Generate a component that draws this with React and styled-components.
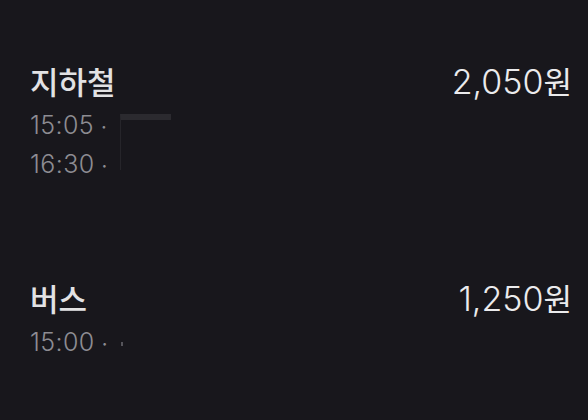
import styled, { createGlobalStyle } from 'styled-components'

const GlobalStyle = createGlobalStyle`
  html, body {
    margin: 0;
    padding: 0;
    background: #18171c;
  }
  body {
    font-family: "Inter", "Noto Sans CJK KR", sans-serif;
    -webkit-font-smoothing: antialiased;
  }
`

const Page = styled.div`
  width: 588px;
  height: 420px;
  box-sizing: border-box;
  padding: 63px 16px 0 30px;
  background: #18171c;
  display: flex;
  flex-direction: column;
  gap: 95px;
  overflow: hidden;
`

const Route = styled.div`
  display: flex;
  justify-content: space-between;
  align-items: flex-start;
`

const Info = styled.div`
  display: flex;
  flex-direction: column;
`

const Title = styled.div`
  font-family: "Noto Sans CJK KR", sans-serif;
  font-size: 31px;
  font-weight: 500;
  line-height: 36px;
  color: #e2e2e4;
`

const TimeBlock = styled.div`
  display: flex;
  margin-top: 8px;
`

const Times = styled.div`
  display: flex;
  flex-direction: column;
`

const Time = styled.div`
  font-size: 25px;
  font-weight: 350;
  letter-spacing: 0.4px;
  line-height: 37px;
  color: #8d8c92;
  white-space: nowrap;
`

const Dot = styled.span`
  margin-left: 7px;
  font-size: 20px;
  font-weight: 400;
`

const Skeleton = styled.div`
  width: 50px;
  height: 50px;
  margin: 7px 0 0 ${p => p.offset}px;
  border-top: 6px solid #2b2a2f;
  border-left: 1px solid #26252a;
`

const Speck = styled.span`
  display: inline-block;
  width: 2px;
  height: 4px;
  margin-left: 13px;
  vertical-align: middle;
  background: #55545a;
`

const Price = styled.div`
  font-size: 34px;
  font-weight: 300;
  line-height: 36px;
  color: #ebebed;
  span {
    font-family: "Noto Sans CJK KR", sans-serif;
    font-weight: 400;
    font-size: 31px;
  }
`

export default function App() {
  return (
    <>
      <GlobalStyle />
      <Page>
        <Route>
          <Info>
            <Title>지하철</Title>
            <TimeBlock>
              <Times>
                <Time>15:05<Dot>·</Dot></Time>
                <Time>16:30<Dot>·</Dot></Time>
              </Times>
              <Skeleton offset={12} />
            </TimeBlock>
          </Info>
          <Price>2,050<span>원</span></Price>
        </Route>
        <Route>
          <Info>
            <Title>버스</Title>
            <TimeBlock>
              <Times>
                <Time>15:00<Dot>·</Dot><Speck /></Time>
              </Times>
            </TimeBlock>
          </Info>
          <Price>1,250<span>원</span></Price>
        </Route>
      </Page>
    </>
  )
}
